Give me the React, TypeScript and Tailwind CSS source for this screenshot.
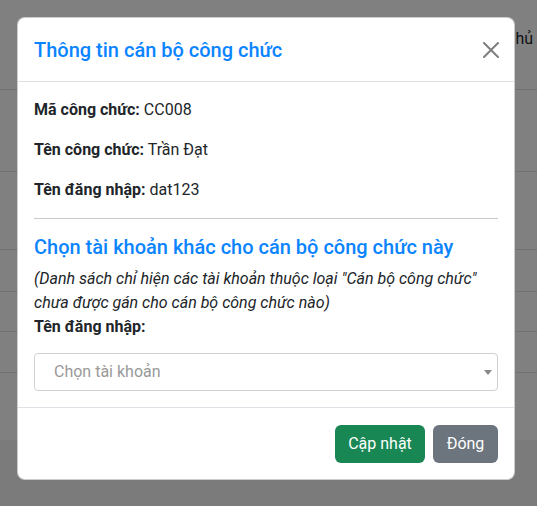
import React from "react";

const closePath =
  "M.293.293a1 1 0 0 1 1.414 0L8 6.586 14.293.293a1 1 0 1 1 1.414 1.414L9.414 8l6.293 6.293a1 1 0 0 1-1.414 1.414L8 9.414l-6.293 6.293a1 1 0 0 1-1.414-1.414L6.586 8 .293 1.707a1 1 0 0 1 0-1.414z";

export default function App() {
  return (
    <main className="relative h-[506px] w-full overflow-hidden bg-[#7b7b7c] font-['Roboto',sans-serif] text-[#212529]">
      {/* Trang phía sau (bị làm mờ bởi backdrop) */}
      <div className="bg-[#808080]">
        <div className="h-[90px] border-b border-[#6f7173] pl-[505px] pt-[27px] text-[16px] leading-6 text-[#101214] whitespace-nowrap">
          Chủ
        </div>
        <div className="h-[82px] border-b border-[#6f7173]"></div>
        <div className="h-[78px] border-b border-[#6f7173]"></div>
        <div className="h-[42px] border-b border-[#6f7173]"></div>
        <div className="h-[40px] border-b border-[#6f7173]"></div>
        <div className="h-[41px] border-b border-[#6f7173]"></div>
        <div className="h-[67px]"></div>
      </div>

      {/* Modal */}
      <section className="absolute left-[17px] top-[17px] w-[498px] rounded-[8px] border border-black/20 bg-white">
        <header className="flex h-[64px] items-center justify-between border-b border-[#dee2e6] pl-4 pr-[15px]">
          <h5 className="text-[20px] leading-[30px] font-medium text-[#0b84ff]">
            Thông tin cán bộ công chức
          </h5>
          <button className="flex h-4 w-4 items-center justify-center opacity-50">
            <svg viewBox="0 0 16 16" className="h-4 w-4" fill="#000">
              <path d={closePath} />
            </svg>
          </button>
        </header>

        <div className="px-4 pt-4 pb-4 text-[16px] leading-6">
          <p className="mb-4">
            <b>Mã công chức:</b> CC008
          </p>
          <p className="mb-4">
            <b>Tên công chức:</b> Trần Đạt
          </p>
          <p className="mb-4">
            <b>Tên đăng nhập:</b> dat123
          </p>
          <hr className="border-t border-[#c8c9ca]" />
          <h5 className="mt-4 mb-2 text-[20px] leading-6 font-medium text-[#0b84ff]">
            Chọn tài khoản khác cho cán bộ công chức này
          </h5>
          <p className="italic">
            (Danh sách chỉ hiện các tài khoản thuộc loại "Cán bộ công chức"
            <br />
            chưa được gán cho cán bộ công chức nào)
          </p>
          <label className="block font-bold mb-[14px]">Tên đăng nhập:</label>
          <div className="flex h-[38px] items-center justify-between rounded-[4px] border border-[#cdd1d5] pl-[19px] pr-[5px]">
            <span className="text-[#999999]">Chọn tài khoản</span>
            <span className="h-0 w-0 border-x-[4px] border-t-[5px] border-x-transparent border-t-[#888888]"></span>
          </div>
        </div>

        <footer className="flex justify-end gap-2 border-t border-[#dee2e6] px-4 pt-[17px] pb-4">
          <button className="h-[38px] w-[90px] rounded-[6px] bg-[#198754] text-[16px] text-white">
            Cập nhật
          </button>
          <button className="h-[38px] w-[65px] rounded-[6px] bg-[#6c757d] text-[16px] text-white">
            Đóng
          </button>
        </footer>
      </section>
    </main>
  );
}
